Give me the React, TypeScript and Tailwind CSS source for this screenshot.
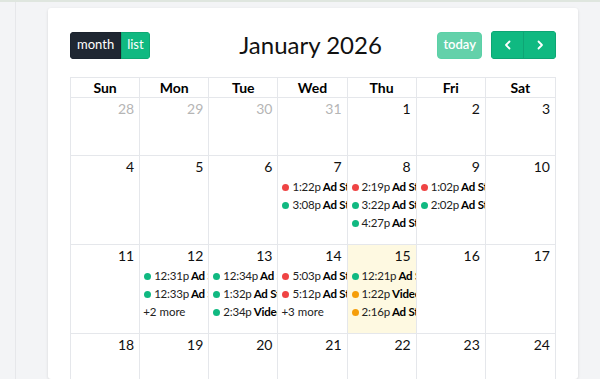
import React from 'react'

type Ev = { time: string; title: string; color: 'red' | 'green' | 'amber' }
type Day = { n: number; muted?: boolean; today?: boolean; events?: Ev[]; more?: string }

const dot = {
  red: 'bg-[#ef4444]',
  green: 'bg-[#10b981]',
  amber: 'bg-[#f59e0b]',
}

const weeks: { h: string; days: Day[] }[] = [
  {
    h: 'h-[58px]',
    days: [
      { n: 28, muted: true },
      { n: 29, muted: true },
      { n: 30, muted: true },
      { n: 31, muted: true },
      { n: 1 },
      { n: 2 },
      { n: 3 },
    ],
  },
  {
    h: 'h-[89px]',
    days: [
      { n: 4 },
      { n: 5 },
      { n: 6 },
      {
        n: 7,
        events: [
          { time: '1:22p', title: 'Ad Story', color: 'red' },
          { time: '3:08p', title: 'Ad Story', color: 'green' },
        ],
      },
      {
        n: 8,
        events: [
          { time: '2:19p', title: 'Ad Story', color: 'red' },
          { time: '3:22p', title: 'Ad Story', color: 'green' },
          { time: '4:27p', title: 'Ad Story', color: 'green' },
        ],
      },
      {
        n: 9,
        events: [
          { time: '1:02p', title: 'Ad Story', color: 'red' },
          { time: '2:02p', title: 'Ad Story', color: 'green' },
        ],
      },
      { n: 10 },
    ],
  },
  {
    h: 'h-[89px]',
    days: [
      { n: 11 },
      {
        n: 12,
        events: [
          { time: '12:31p', title: 'Ad Story', color: 'green' },
          { time: '12:33p', title: 'Ad Story', color: 'green' },
        ],
        more: '+2 more',
      },
      {
        n: 13,
        events: [
          { time: '12:34p', title: 'Ad Story', color: 'green' },
          { time: '1:32p', title: 'Ad Story', color: 'green' },
          { time: '2:34p', title: 'Video', color: 'green' },
        ],
      },
      {
        n: 14,
        events: [
          { time: '5:03p', title: 'Ad Story', color: 'red' },
          { time: '5:12p', title: 'Ad Story', color: 'red' },
        ],
        more: '+3 more',
      },
      {
        n: 15,
        today: true,
        events: [
          { time: '12:21p', title: 'Ad Story', color: 'green' },
          { time: '1:22p', title: 'Video', color: 'amber' },
          { time: '2:16p', title: 'Ad Story', color: 'amber' },
        ],
      },
      { n: 16 },
      { n: 17 },
    ],
  },
  {
    h: 'h-[89px]',
    days: [{ n: 18 }, { n: 19 }, { n: 20 }, { n: 21 }, { n: 22 }, { n: 23 }, { n: 24 }],
  },
]

const dows = ['Sun', 'Mon', 'Tue', 'Wed', 'Thu', 'Fri', 'Sat']

function Cell({ d, h, last }: { d: Day; h: string; last: boolean }) {
  return (
    <div
      className={`${h} overflow-hidden border-t border-[#e5e7eb] ${last ? '' : 'border-r'} ${
        d.today ? 'bg-[#fef9e1]' : 'bg-white'
      }`}
    >
      <div className={`pr-[5px] pt-[2px] text-right text-[14px] leading-[18px] ${d.muted ? 'text-[#b5b5b5]' : 'text-[#111]'}`}>
        {d.n}
      </div>
      <div className="mt-[2px] flex flex-col">
        {d.events?.map((e, i) => (
          <div key={i} className="flex h-[18px] items-center whitespace-nowrap pl-[4px] text-[11.5px] tracking-[-0.2px]">
            <span className={`mr-[3px] h-[7px] w-[7px] shrink-0 rounded-full ${dot[e.color]}`} />
            <span className="text-[#222]">{e.time}</span>
            <span className="ml-[2px] font-bold text-black">{e.title}</span>
          </div>
        ))}
        {d.more && <div className="pl-[3px] text-[11.5px] leading-[18px] text-[#222]">{d.more}</div>}
      </div>
    </div>
  )
}

export default function App() {
  return (
    <div
      className="h-[379px] w-[600px] overflow-hidden border-t-2 border-[#dfe6df] bg-[#f3f4f6]"
      style={{ fontFamily: 'Lato, "Noto Sans", sans-serif' }}
    >
      <div className="flex h-full">
        <div className="w-[16px] shrink-0 border-r border-[#e6e7ea]" />
        <div className="w-[32px] shrink-0" />
        <div className="mt-[6px] w-[530px] shrink-0 rounded-[3px] bg-white px-[22px] pt-[23px] shadow-[0_1px_3px_rgba(0,0,0,0.12)]">
          {/* Toolbar */}
          <div className="flex h-[28px] items-center">
            <div className="flex h-[27px] overflow-hidden rounded-[4px] text-[13px] text-white">
              <button className="border border-[#1b232e] bg-[#1f2732] px-[6px]">month</button>
              <button className="border border-[#0fa873] bg-[#10b981] px-[5px]">list</button>
            </div>
            <h2 className="flex-1 pl-[34px] text-center text-[24px] font-normal text-[#111]">January 2026</h2>
            <div className="flex items-center gap-[9px]">
              <button className="h-[27px] rounded-[4px] border border-[#5bd1a7] bg-[#63d1aa] px-[5px] text-[13px] font-semibold text-white">
                today
              </button>
              <div className="flex h-[28px] overflow-hidden rounded-[4px] text-white">
                <button className="flex w-[33px] items-center justify-center border border-[#0ea574] bg-[#10b981]">
                  <svg width="12" height="12" viewBox="0 0 12 12" fill="none">
                    <path d="M7.5 2.5L4 6l3.5 3.5" stroke="currentColor" strokeWidth="1.8" strokeLinecap="round" strokeLinejoin="round" />
                  </svg>
                </button>
                <button className="flex w-[32px] items-center justify-center border border-l-0 border-[#0ea574] bg-[#10b981]">
                  <svg width="12" height="12" viewBox="0 0 12 12" fill="none">
                    <path d="M4.5 2.5L8 6l-3.5 3.5" stroke="currentColor" strokeWidth="1.8" strokeLinecap="round" strokeLinejoin="round" />
                  </svg>
                </button>
              </div>
            </div>
          </div>

          {/* Grid */}
          <div className="mt-[18px] border-l border-t border-r border-[#e5e7eb]">
            <div className="grid grid-cols-7">
              {dows.map((d, i) => (
                <div
                  key={d}
                  className={`h-[19px] text-center text-[14px] font-bold leading-[19px] text-black ${i < 6 ? 'border-r border-[#e5e7eb]' : ''}`}
                >
                  {d}
                </div>
              ))}
            </div>
            {weeks.map((w, wi) => (
              <div key={wi} className="grid grid-cols-7">
                {w.days.map((d, i) => (
                  <Cell key={i} d={d} h={w.h} last={i === 6} />
                ))}
              </div>
            ))}
          </div>
        </div>
      </div>
    </div>
  )
}
